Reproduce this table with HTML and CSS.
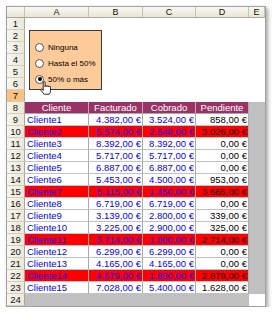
FILE: index.html
```html
<!DOCTYPE html>
<html>
<head>
<meta charset="utf-8">
<link rel="stylesheet" href="styles.css">
</head>
<body>
<div class="window">
  <div class="sheet">
    <div class="ch corner"></div>
    <div class="ch">A</div>
    <div class="ch">B</div>
    <div class="ch">C</div>
    <div class="ch">D</div>
    <div class="ch">E</div>

    <div class="rh">1</div>
    <div class="blank">
      <div class="optbox">
        <div class="opt"><span class="radio"></span><span>Ninguna</span></div>
        <div class="opt"><span class="radio"></span><span>Hasta el 50%</span></div>
        <div class="opt"><span class="radio on"></span><span>50% o más</span></div>
        <svg class="hand" width="11" height="14" viewBox="0 0 12 15">
          <path d="M3.5 1.5 Q3.5 0.5 4.5 0.5 Q5.5 0.5 5.5 1.5 V6 Q5.5 5 6.5 5 Q7.5 5 7.5 6 Q7.5 5.2 8.5 5.2 Q9.5 5.2 9.5 6.2 Q9.5 5.6 10.5 5.6 Q11.5 5.6 11.5 6.6 V10.5 Q11.5 12.8 10 14.3 H4.5 L1 10 Q0.3 9 1.2 8.6 Q2 8.3 3.5 10 Z" fill="#fff" stroke="#000" stroke-width="0.9"/>
        </svg>
      </div>
    </div>
    <div class="rh">2</div>
    <div class="rh">3</div>
    <div class="rh">4</div>
    <div class="rh">5</div>
    <div class="rh">6</div>
    <div class="rh sel">7</div>

    <div class="rh">8</div>
    <div class="th">Cliente</div>
    <div class="th">Facturado</div>
    <div class="th">Cobrado</div>
    <div class="th">Pendiente</div>
    <div class="shade"></div>

    <div class="rh">9</div>
    <div class="td">Cliente1</div><div class="td num">4.382,00 €</div><div class="td num">3.524,00 €</div><div class="td num pend">858,00 €</div>
    <div class="rh">10</div>
    <div class="td r">Cliente2</div><div class="td num r">5.574,00 €</div><div class="td num r">2.548,00 €</div><div class="td num pend r">3.026,00 €</div>
    <div class="rh">11</div>
    <div class="td">Cliente3</div><div class="td num">8.392,00 €</div><div class="td num">8.392,00 €</div><div class="td num pend">0,00 €</div>
    <div class="rh">12</div>
    <div class="td">Cliente4</div><div class="td num">5.717,00 €</div><div class="td num">5.717,00 €</div><div class="td num pend">0,00 €</div>
    <div class="rh">13</div>
    <div class="td">Cliente5</div><div class="td num">6.887,00 €</div><div class="td num">6.887,00 €</div><div class="td num pend">0,00 €</div>
    <div class="rh">14</div>
    <div class="td">Cliente6</div><div class="td num">5.453,00 €</div><div class="td num">4.500,00 €</div><div class="td num pend">953,00 €</div>
    <div class="rh">15</div>
    <div class="td r">Cliente7</div><div class="td num r">5.115,00 €</div><div class="td num r">1.450,00 €</div><div class="td num pend r">3.665,00 €</div>
    <div class="rh">16</div>
    <div class="td">Cliente8</div><div class="td num">6.719,00 €</div><div class="td num">6.719,00 €</div><div class="td num pend">0,00 €</div>
    <div class="rh">17</div>
    <div class="td">Cliente9</div><div class="td num">3.139,00 €</div><div class="td num">2.800,00 €</div><div class="td num pend">339,00 €</div>
    <div class="rh">18</div>
    <div class="td">Cliente10</div><div class="td num">3.225,00 €</div><div class="td num">2.900,00 €</div><div class="td num pend">325,00 €</div>
    <div class="rh">19</div>
    <div class="td r">Cliente11</div><div class="td num r">3.714,00 €</div><div class="td num r">1.000,00 €</div><div class="td num pend r">2.714,00 €</div>
    <div class="rh">20</div>
    <div class="td">Cliente12</div><div class="td num">6.299,00 €</div><div class="td num">6.299,00 €</div><div class="td num pend">0,00 €</div>
    <div class="rh">21</div>
    <div class="td">Cliente13</div><div class="td num">4.165,00 €</div><div class="td num">4.165,00 €</div><div class="td num pend">0,00 €</div>
    <div class="rh">22</div>
    <div class="td r">Cliente14</div><div class="td num r">4.679,00 €</div><div class="td num r">1.800,00 €</div><div class="td num pend r">2.879,00 €</div>
    <div class="rh">23</div>
    <div class="td">Cliente15</div><div class="td num">7.028,00 €</div><div class="td num">5.400,00 €</div><div class="td num pend">1.628,00 €</div>

    <div class="rh">24</div>
    <div class="shade-b"></div>
    <div class="empty"></div>
  </div>
</div>
</body>
</html>
```

FILE: styles.css
```css
body {
  margin: 0;
  padding: 6px 0 0 6px;
  background: #fff;
  font-family: "Liberation Sans", Arial, sans-serif;
}

.window {
  width: 258px;
  height: 299px;
  border: 1px solid #a0a0a0;
  box-shadow: 2px 2px 4px rgba(0, 0, 0, 0.35);
  background: #fff;
  overflow: hidden;
}

.sheet {
  display: grid;
  grid-template-columns: 18px 64px 54px 53px 53px 16px;
  grid-template-rows: 11px repeat(24, 12px);
  font-size: 9.5px;
}

.sheet > div {
  box-sizing: border-box;
}

.ch {
  background: linear-gradient(#faf9f3, #e8e5d5);
  border-right: 1px solid #c6c3b2;
  border-bottom: 1px solid #aca899;
  text-align: center;
  line-height: 10px;
  font-size: 9px;
  color: #111;
}

.rh {
  background: linear-gradient(90deg, #f7f6ef, #ebe8d9);
  border-right: 1px solid #aca899;
  border-bottom: 1px solid #d2cfc0;
  text-align: center;
  line-height: 11px;
  color: #111;
}

.rh.sel {
  background: #f9c27f;
}

.blank {
  grid-column: span 5;
  grid-row: span 7;
  position: relative;
}

.optbox {
  position: absolute;
  left: 4px;
  top: 12px;
  width: 73px;
  height: 60px;
  box-sizing: border-box;
  border: 1px solid #3c3c3c;
  background: #fdca9a;
  padding: 8px 0 0 5px;
  display: flex;
  flex-direction: column;
  font-size: 8px;
  color: #000;
}

.opt {
  height: 16px;
  display: flex;
  align-items: center;
  gap: 4px;
}

.radio {
  width: 9px;
  height: 9px;
  box-sizing: border-box;
  border-radius: 50%;
  border: 1px solid #555;
  background: #fff;
  display: flex;
  align-items: center;
  justify-content: center;
}

.radio.on::after {
  content: "";
  width: 4px;
  height: 4px;
  border-radius: 50%;
  background: #000;
}

.hand {
  position: absolute;
  left: 10px;
  top: 50px;
}

.th {
  background: #993366;
  color: #fff;
  text-align: center;
  line-height: 11px;
  border-right: 1px solid #c8a2b5;
  border-bottom: 1px solid #a8a8a8;
}

.td {
  color: #0000ff;
  line-height: 11px;
  padding: 0 2px;
  white-space: nowrap;
  overflow: hidden;
  border-right: 1px solid #ababab;
  border-bottom: 1px solid #c2c2c2;
  background: #fff;
}

.num {
  text-align: right;
  padding-right: 1px;
}

.pend {
  color: #000;
}

.td.r {
  background: #ff0000;
}

.shade {
  grid-row: span 16;
  background: #c0c0c0;
}

.shade-b {
  grid-column: span 4;
  background: #c0c0c0;
}
```
